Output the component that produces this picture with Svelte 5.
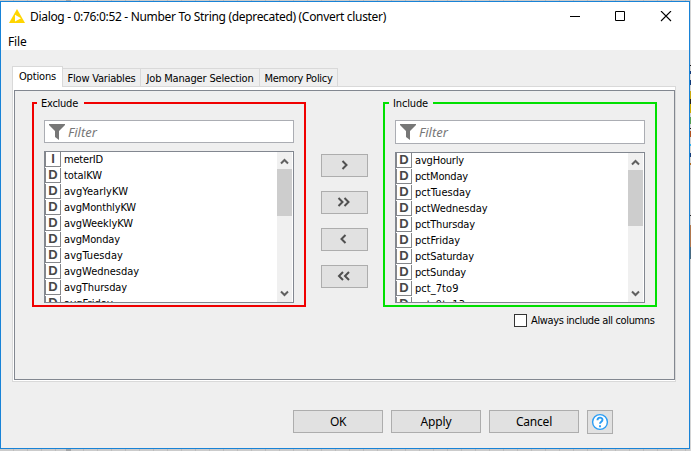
<script>
  const tabs = [
    { name: 'Options', width: 51, text: 37 },
    { name: 'Flow Variables', width: 78, text: 68 },
    { name: 'Job Manager Selection', width: 119, text: 107 },
    { name: 'Memory Policy', width: 78, text: 68 }
  ];
  const excluded = [
    ['I', 'meterID', 39], ['D', 'totalKW', 38], ['D', 'avgYearlyKW', 64],
    ['D', 'avgMonthlyKW', 72], ['D', 'avgWeeklyKW', 69], ['D', 'avgMonday', 56],
    ['D', 'avgTuesday', 59], ['D', 'avgWednesday', 75], ['D', 'avgThursday', 63],
    ['D', 'avgFriday', 49]
  ];
  const included = [
    ['D', 'avgHourly', 49], ['D', 'pctMonday', 53], ['D', 'pctTuesday', 56],
    ['D', 'pctWednesday', 72.5], ['D', 'pctThursday', 60], ['D', 'pctFriday', 45],
    ['D', 'pctSaturday', 59], ['D', 'pctSunday', 51], ['D', 'pct_7to9', 43.5],
    ['D', 'pct_9to13', 50]
  ];
  const moves = [
    { label: 'Include selected', paths: ['M21.5 7l4 4-4 4'] },
    { label: 'Include all', paths: ['M17.5 7l4 4-4 4', 'M23.5 7l4 4-4 4'] },
    { label: 'Exclude selected', paths: ['M24.5 7l-4 4 4 4'] },
    { label: 'Exclude all', paths: ['M22 7l-4 4 4 4', 'M28 7l-4 4 4 4'] }
  ];
  const actions = [['OK', 16], ['Apply', 31], ['Cancel', 36]];

  // Tracks a label out or in so that it takes up the given width.
  function fit(node, width) {
    const natural = node.getBoundingClientRect().width;
    node.style.letterSpacing = `${(width - natural) / node.textContent.length}px`;
  }
</script>

{#snippet pane(kind, title, titleWidth, rows)}
  <section class="pane {kind}">
    <h2><span use:fit={titleWidth}>{title}</span></h2>
    <div class="filter">
      <svg width="16" height="16" viewBox="0 0 16 16"><path d="M0 0h16v1l-6 6v9l-4-3V7L0 1z" fill="#777" /></svg>
      <span use:fit={29}>Filter</span>
    </div>
    <div class="list">
      <ul>
        {#each rows as [type, name, width]}
          <li><b>{type}</b><span use:fit={width}>{name}</span></li>
        {/each}
      </ul>
      <div class="scroll">
        <svg width="15" height="17"><path d="M4 11.5l3.5-3.5 3.5 3.5" /></svg>
        <div class="thumb"></div>
        <svg class="down" width="15" height="17"><path d="M4 6.5l3.5 3.5 3.5-3.5" /></svg>
      </div>
    </div>
  </section>
{/snippet}

<div class="desktop">
  <div class="window">
    <header>
      <svg class="logo" width="16" height="14" viewBox="0 0 16 14"><path d="M8 0l8 14H0z" fill="#ffd500" /><path d="M6 5.8l6 3.4-6 3.3z" fill="#fff" /></svg>
      <h1><span use:fit={356}>Dialog - 0:76:0:52 - Number To String (deprecated) (Convert cluster)</span></h1>
      <svg class="controls" width="103" height="12" fill="none" stroke="#000">
        <path d="M0 5.5h10M45.5 .5h9v9h-9z" />
        <path d="M91 0l10 10M101 0L91 10" stroke-width="1.1" />
      </svg>
    </header>
    <nav class="menu"><span use:fit={18.5}>File</span></nav>
    <nav class="tabs">
      {#each tabs as tab, i}
        <div class="tab" class:active={i === 0} style:width="{tab.width}px"><span use:fit={tab.text}>{tab.name}</span></div>
      {/each}
    </nav>
    <div class="frame">
      <main>
        <div class="columns">
          {@render pane('exclude', 'Exclude', 37, excluded)}
          <div class="moves">
            {#each moves as move}
              <button aria-label={move.label}>
                <svg width="45" height="21" viewBox="1 1 45 21" fill="none" stroke="#505050" stroke-width="2">
                  {#each move.paths as d}<path {d} />{/each}
                </svg>
              </button>
            {/each}
          </div>
          {@render pane('include', 'Include', 35, included)}
        </div>
        <label><i></i><span use:fit={123.5}>Always include all columns</span></label>
      </main>
    </div>
    <footer>
      {#each actions as [name, width]}
        <button><span use:fit={width}>{name}</span></button>
      {/each}
      <button class="help" aria-label="Help">
        <svg width="18" height="18"><circle cx="9" cy="9" r="7.4" fill="#fff" stroke="#2a9df4" stroke-width="1.4" /><path d="M6.5 7.2c0-3.3 5-3.3 5-.4 0 2-2.5 1.9-2.5 4M9 12.2v2" fill="none" stroke="#2a9df4" stroke-width="1.9" /></svg>
      </button>
    </footer>
  </div>
</div>

<style>
  .desktop {
    box-sizing: border-box;
    width: 691px;
    height: 451px;
    padding: 1px 1px 2px 0;
    overflow: hidden;
    /* The strip of workspace that shows past the window's right and bottom edges. */
    background:
      linear-gradient(
        #d4d4d4 65px, #111 65px 66px, #d4d4d4 66px 71px, #123a78 71px 74px,
        #d4d4d4 74px 80px, #123a78 80px 85px, #d4d4d4 85px 91px, #c9a80c 91px 99px,
        #222 99px 104px, #d0ac00 104px 113px, #d4d4d4 113px 117px, #55a055 117px 124px,
        #d4d4d4 124px 128px, #111 128px 129px, #d4d4d4 129px 131px, #b0501c 131px 137px,
        #d4d4d4 137px 144px, #30b0f0 144px 146px, #d4d4d4 146px 153px, #123a78 153px 157px,
        #d4d4d4 157px 163px, #b06a20 163px 165px, #d4d4d4 165px 215px, #222 215px 216px,
        #d4d4d4 216px 225px, #b0764c 225px 247px, #4a6a80 247px 259px, #d4d4d4 259px
      ) right / 1px 100% no-repeat,
      linear-gradient(90deg, transparent 66px, #a2a4a6 66px 71px, transparent 71px),
      repeating-linear-gradient(90deg, #cbcbcb 0 13px, #bcbcbc 13px 14px);
    color: #000;
    font: 11px/16px "DejaVu Sans Condensed", "DejaVu Sans", sans-serif;
    font-stretch: condensed;
  }
  .desktop * { box-sizing: border-box; }
  span { white-space: nowrap; flex: none; }
  svg { display: block; flex: none; }
  .window {
    width: 690px;
    height: 448px;
    border: 1px solid #1883d7;
    background: #efefef;
  }
  header {
    display: flex;
    align-items: center;
    height: 30px;
    padding: 0 16px 0 8px;
    background: #fff;
  }
  .logo { margin-top: -2px; }
  h1 { margin: 0 0 0 5px; font: 400 12px/16px "Noto Sans", sans-serif; }
  .controls { margin-left: auto; }
  .menu {
    height: 18px;
    padding: 2px 7px 0;
    background: #fff;
    font: 12px/16px "Noto Sans", sans-serif;
  }
  .tabs {
    display: flex;
    align-items: flex-end;
    height: 36px;
    padding-left: 11px;
  }
  .tab {
    display: flex;
    justify-content: center;
    height: 18px;
    padding-top: 1px;
    line-height: 18px;
    border: solid #d9d9d9;
    border-width: 1px 1px 0 0;
  }
  .tab.active {
    position: relative;
    height: 21px;
    margin-bottom: -1px;
    border-left-width: 1px;
    background: #fff;
  }
  .frame {
    width: 664px;
    height: 296px;
    margin-left: 11px;
    padding: 3px 0 1px 1px;
    border: 1px solid #d9d9d9;
    background: #fff;
  }
  main {
    width: 661px;
    height: 290px;
    border: 1px solid #828790;
    background: #efefef;
  }
  .columns {
    display: flex;
    padding: 11px 0 0 17px;
  }
  .pane {
    width: 274px;
    height: 205px;
    border: 2px solid #f00000;
    padding: 0 10px;
  }
  .include { border-color: #00e000; }
  h2 {
    width: 47px;
    height: 16px;
    margin: -9px 0 0 -7px;
    padding-left: 4px;
    background: #efefef;
    font-size: 11px;
    line-height: 18px;
    font-weight: 400;
  }
  .include h2 { width: 44px; margin-left: -6px; padding-left: 4px; }
  .filter {
    display: flex;
    align-items: center;
    gap: 3px;
    width: 250px;
    height: 23px;
    margin-top: 9px;
    padding-left: 4px;
    border: 1px solid #abadb3;
    background: #fff;
    color: #777;
    font: italic 13px/16px "Noto Sans", sans-serif;
  }
  .include .filter { height: 24px; }
  .list {
    display: flex;
    justify-content: space-between;
    width: 250px;
    height: 152px;
    margin-top: 8px;
    border: 1px solid #828790;
    background: #fff;
    overflow: hidden;
  }
  .include .list { height: 151px; }
  ul { margin: 0; padding: 0; list-style: none; }
  li { display: flex; height: 16px; line-height: 15px; }
  b {
    width: 16px;
    height: 15px;
    margin-right: 3px;
    border: 1px solid #85878b;
    border-width: 0 1px 1px 1px;
    color: #484848;
    font: 700 13px/14px "Liberation Sans", sans-serif;
    text-align: center;
  }
  .scroll {
    display: flex;
    flex-direction: column;
    width: 15px;
    margin-right: 1px;
    background: #f0f0f0;
  }
  .scroll path { fill: none; stroke: #606060; stroke-width: 2; }
  .thumb { height: 47px; background: #cdcdcd; }
  .include .thumb { height: 56px; }
  .down { margin-top: auto; }
  .moves {
    display: flex;
    flex-direction: column;
    gap: 14px;
    padding: 52px 15px 0;
  }
  button {
    display: flex;
    align-items: center;
    justify-content: center;
    width: 47px;
    height: 23px;
    padding: 0;
    border: 1px solid #adadad;
    background: #e1e1e1;
    color: #000;
    font: 12px/16px "Noto Sans", sans-serif;
  }
  label {
    display: flex;
    align-items: center;
    gap: 4px;
    height: 16px;
    margin: 5px 0 0 499px;
  }
  label span { line-height: 16px; padding-top: 2px; }
  i {
    width: 13px;
    height: 13px;
    border: 1px solid #333;
    background: #fff;
  }
  footer {
    display: flex;
    gap: 8px;
    padding: 28px 0 0 292px;
  }
  footer button { width: 90px; }
  footer .help { width: 26px; height: 24px; }
</style>
